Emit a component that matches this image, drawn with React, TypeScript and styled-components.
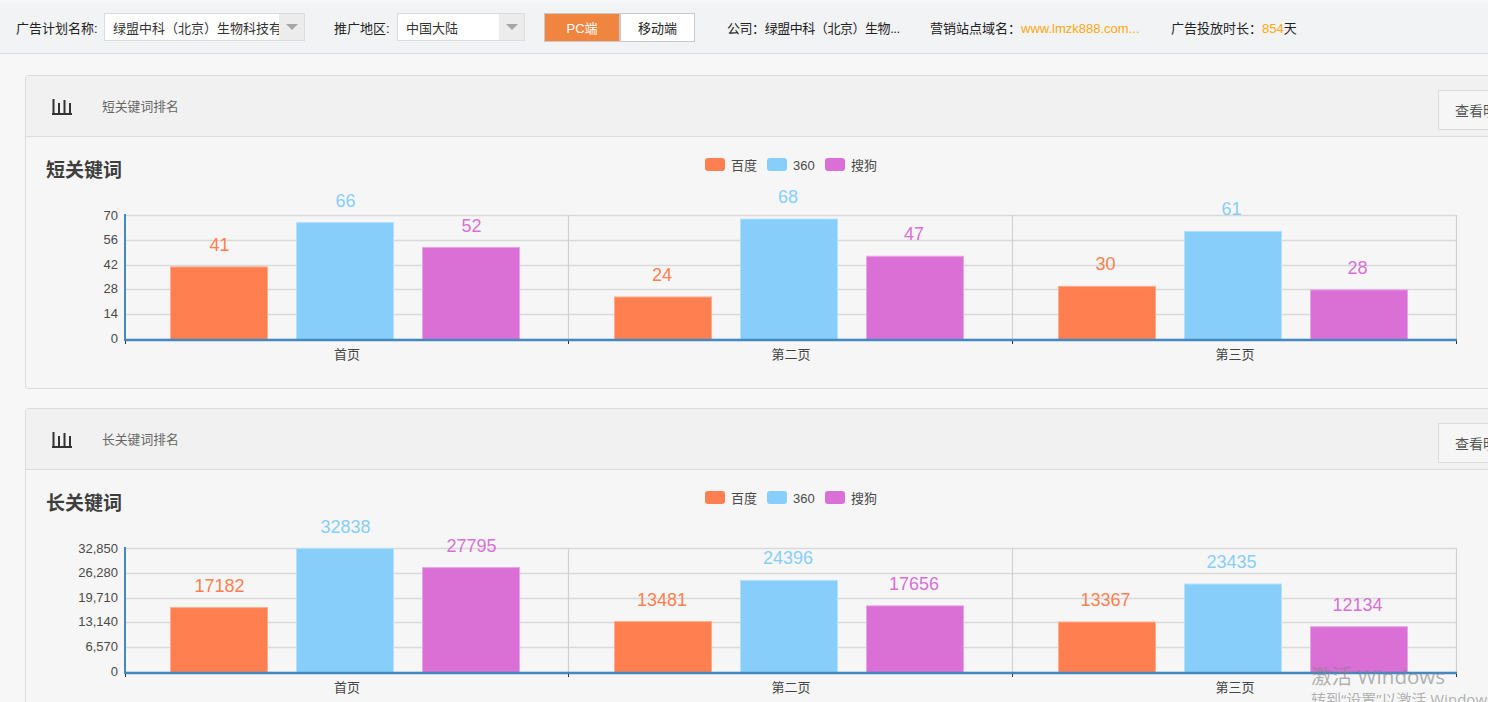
import React from "react";
import styled, { createGlobalStyle } from "styled-components";

const CJK = `"Liberation Sans", "Noto Sans CJK SC", sans-serif`;

const Global = createGlobalStyle`
  html, body { margin: 0; padding: 0; height: 702px; overflow: hidden; background: #f7f7f7; }
  body { font-family: ${CJK}; }
  * { box-sizing: border-box; }
`;

const Page = styled.div`
  width: 1488px;
  height: 702px;
  overflow: hidden;
  padding-top: 3px;
  background: #f7f7f7;
  position: relative;
`;

const Toolbar = styled.div`
  height: 51px;
  background: #f2f3f5;
  border-bottom: 1px solid #dcdcdc;
  display: flex;
  align-items: center;
  padding: 0 0 2px 16px;
  font-size: 13px;
  color: #222;
`;

const Label = styled.span<{ $w: number }>`
  width: ${(p) => p.$w}px;
  flex: none;
  white-space: nowrap;
`;

const Select = styled.div<{ $w: number; $gap: number }>`
  width: ${(p) => p.$w}px;
  height: 28px;
  margin-right: ${(p) => p.$gap}px;
  border: 1px solid #dcdcdc;
  background: #fff;
  display: flex;
  align-items: center;
  flex: none;
`;

const SelectText = styled.span`
  flex: 1;
  min-width: 0;
  padding-left: 8px;
  overflow: hidden;
  white-space: nowrap;
  color: #333;
`;

const Arrow = styled.span`
  width: 25px;
  height: 100%;
  flex: none;
  background: #ececec;
  display: flex;
  align-items: center;
  justify-content: center;
  &::after {
    content: "";
    border-left: 6px solid transparent;
    border-right: 6px solid transparent;
    border-top: 6px solid #a6a6a6;
  }
`;

const ToggleGroup = styled.div`
  display: flex;
  margin-right: 32px;
  flex: none;
`;

const Toggle = styled.div<{ $on?: boolean }>`
  width: ${(p) => (p.$on ? 76 : 75)}px;
  height: 29px;
  border: 1px solid #c9c9c9;
  background: ${(p) => (p.$on ? "#f0853f" : "#fff")};
  color: ${(p) => (p.$on ? "#fff" : "#222")};
  display: flex;
  align-items: center;
  justify-content: center;
`;

const Info = styled.div<{ $w: number; $tight?: boolean }>`
  width: ${(p) => p.$w}px;
  flex: none;
  white-space: nowrap;
  color: #222;
  letter-spacing: ${(p) => (p.$tight ? "-0.45px" : "0")};
`;

const Accent = styled.span`
  color: #ffa812;
`;

const Content = styled.div`
  padding: 21px 0 0 25px;
  display: flex;
  flex-direction: column;
  gap: 19px;
`;

const Card = styled.section`
  width: 1520px;
  flex: none;
  border: 1px solid #dcdcdc;
  border-radius: 3px 0 0 3px;
  background: #f6f6f6;
`;

const CardHeader = styled.header`
  height: 61px;
  background: #f1f1f1;
  border-bottom: 1px solid #dcdcdc;
  display: flex;
  align-items: center;
  padding-left: 26px;
`;

const HeaderIcon = styled.svg`
  flex: none;
  margin-top: 2px;
`;

const HeaderTitle = styled.span`
  margin-left: 30px;
  padding-bottom: 1px;
  font-size: 12.8px;
  color: #666;
  white-space: nowrap;
`;

const DetailButton = styled.button`
  margin-left: auto;
  margin-right: 16px;
  align-self: flex-start;
  margin-top: 14px;
  width: 90px;
  height: 40px;
  border: 1px solid #dcdcdc;
  background: #f6f6f6;
  color: #555;
  font: 14px ${CJK};
  text-align: left;
  padding: 0 0 0 16px;
`;

const CardBody = styled.div`
  height: 251px;
`;

const ChartSvg = styled.svg`
  display: block;
`;

const Watermark = styled.div`
  position: absolute;
  left: 1311px;
  top: 663px;
  color: rgba(130, 130, 130, 0.62);
  white-space: nowrap;
  pointer-events: none;
`;

const WatermarkTitle = styled.div`
  font: 20.6px/26px "Open Sans", "Noto Sans CJK SC", sans-serif;
`;

const WatermarkSub = styled.div`
  font: 15px/20px "Open Sans", "Noto Sans CJK SC", sans-serif;
`;

const COLORS = ["#ff7f50", "#87cefa", "#da70d6"];
const LIGHT = ["#ffab8c", "#b4e0fb", "#e8a5e5"];
const BAR_X = [170, 296, 422, 614, 740, 866, 1058, 1184, 1310];
const GROUP_DX = [0, -1.5, -2];
const CATS = ["首页", "第二页", "第三页"];
const LEGEND: [number, string][] = [
  [705, "百度"],
  [767, "360"],
  [825, "搜狗"],
];

type ChartProps = { title: string; max: number; ticks: string[]; values: number[] };

function Chart({ title, max, ticks, values }: ChartProps) {
  const ox = 26;
  const oy = 137;
  const gridY = [215, 240, 265, 289, 314, 339].map((y) => y - oy);
  const x = (v: number) => v - ox;
  return (
    <ChartSvg width={1520} height={251} viewBox="0 0 1520 251" fontFamily={CJK}>
      <text x={x(46)} y={170 - oy + 7} fontSize={19} fontWeight="bold" fill="#3e3e3e">
        {title}
      </text>
      {LEGEND.map(([lx, name], i) => (
        <g key={name}>
          <rect x={x(lx)} y={158 - oy} width={20} height={13} rx={3} fill={COLORS[i]} />
          <text x={x(lx + 26)} y={169.5 - oy} fontSize={13} fill="#4a4a4a">
            {name}
          </text>
        </g>
      ))}
      {gridY.map((y) => (
        <line key={y} x1={x(126)} x2={x(1456)} y1={y + 0.5} y2={y + 0.5} stroke="#d9d9d9" strokeWidth={1.4} />
      ))}
      {[568, 1012, 1456].map((gx) => (
        <line key={gx} x1={x(gx) + 0.5} x2={x(gx) + 0.5} y1={215 - oy} y2={339 - oy} stroke="#d0d0d0" strokeWidth={1.2} />
      ))}
      {ticks.map((t, i) => (
        <text
          key={t}
          x={x(118)}
          y={gridY[i] + (i === 0 ? 4.5 : i === 5 ? 3.5 : 4)}
          fontSize={13}
          fill="#4a4a4a"
          textAnchor="end"
        >
          {t}
        </text>
      ))}
      {values.map((v, i) => {
        const h = (v / max) * 124;
        const top = 339 - oy - h;
        const c = i % 3;
        const g = Math.floor(i / 3);
        return (
          <g key={i}>
            <rect x={x(BAR_X[i]) + 0.5} y={top + 0.5} width={97} height={h} fill={COLORS[c]} stroke={LIGHT[c]} />
            <text
              x={x(BAR_X[i]) + 49.5 + GROUP_DX[g]}
              y={top - (g === 0 ? 15 : 15.5)}
              fontSize={18}
              fill={COLORS[c]}
              textAnchor="middle"
            >
              {v}
            </text>
          </g>
        );
      })}
      <line x1={x(125)} x2={x(1457)} y1={340 - oy} y2={340 - oy} stroke="#4488c2" strokeWidth={2.4} />
      <line x1={x(125)} x2={x(125)} y1={214 - oy} y2={341 - oy} stroke="#4488c2" strokeWidth={2} />
      {[125, 568, 1012, 1456].map((tx) => (
        <line key={tx} x1={x(tx) + 0.5} x2={x(tx) + 0.5} y1={341 - oy} y2={344 - oy} stroke="#333" />
      ))}
      {CATS.map((c, i) => (
        <text key={c} x={x(347 + i * 444)} y={359 - oy} fontSize={13} fill="#444" textAnchor="middle">
          {c}
        </text>
      ))}
    </ChartSvg>
  );
}

function BarIcon() {
  return (
    <HeaderIcon width="20" height="18" viewBox="0 0 20 18" fill="none" stroke="#333" strokeWidth="2">
      <path d="M0 16h20M1.5 16V1M7 16V5M12.5 16V2M18 16V5" />
    </HeaderIcon>
  );
}

const DATA = [
  {
    head: "短关键词排名",
    title: "短关键词",
    max: 70,
    ticks: ["70", "56", "42", "28", "14", "0"],
    values: [41, 66, 52, 24, 68, 47, 30, 61, 28],
  },
  {
    head: "长关键词排名",
    title: "长关键词",
    max: 32850,
    ticks: ["32,850", "26,280", "19,710", "13,140", "6,570", "0"],
    values: [17182, 32838, 27795, 13481, 24396, 17656, 13367, 23435, 12134],
  },
];

export default function App() {
  return (
    <Page>
      <Global />
      <Toolbar>
        <Label $w={88}>广告计划名称:</Label>
        <Select $w={201} $gap={29}>
          <SelectText>绿盟中科（北京）生物科技有限公司</SelectText>
          <Arrow />
        </Select>
        <Label $w={63}>推广地区:</Label>
        <Select $w={128} $gap={19}>
          <SelectText>中国大陆</SelectText>
          <Arrow />
        </Select>
        <ToggleGroup>
          <Toggle $on>PC端</Toggle>
          <Toggle>移动端</Toggle>
        </ToggleGroup>
        <Info $w={203} $tight>
          公司：绿盟中科（北京）生物...
        </Info>
        <Info $w={241}>
          营销站点域名：<Accent>www.lmzk888.com...</Accent>
        </Info>
        <Info $w={140}>
          广告投放时长：<Accent>854</Accent>天
        </Info>
      </Toolbar>
      <Content>
        {DATA.map((d) => (
          <Card key={d.head}>
            <CardHeader>
              <BarIcon />
              <HeaderTitle>{d.head}</HeaderTitle>
              <DetailButton>查看明细</DetailButton>
            </CardHeader>
            <CardBody>
              <Chart title={d.title} max={d.max} ticks={d.ticks} values={d.values} />
            </CardBody>
          </Card>
        ))}
      </Content>
      <Watermark>
        <WatermarkTitle>激活 Windows</WatermarkTitle>
        <WatermarkSub>转到“设置”以激活 Windows。</WatermarkSub>
      </Watermark>
    </Page>
  );
}
